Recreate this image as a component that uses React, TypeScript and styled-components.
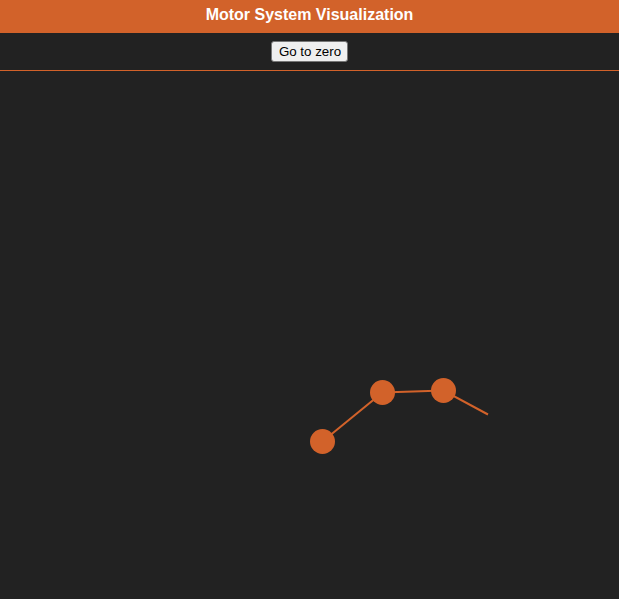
import React from "react";
import styled, { createGlobalStyle } from "styled-components";

const Global = createGlobalStyle`
  html, body { margin: 0; padding: 0; background: #222222; }
  body { font-family: "Liberation Sans", Arial, sans-serif; }
`;

const ACCENT = "#d2622a";

const Page = styled.div`
  display: flex;
  flex-direction: column;
  height: 599px;
  background: #222222;
`;

const Header = styled.header`
  height: 33px;
  box-sizing: border-box;
  background: ${ACCENT};
  color: #ffffff;
  font-weight: bold;
  font-size: 16px;
  display: flex;
  align-items: center;
  justify-content: center;
  padding-bottom: 4px;
`;

const Toolbar = styled.div`
  height: 38px;
  box-sizing: border-box;
  display: flex;
  justify-content: center;
  align-items: flex-start;
  padding-top: 8px;
  border-bottom: 1px solid ${ACCENT};
`;

const Button = styled.button`
  font-family: "Liberation Sans", Arial, sans-serif;
  font-size: 13.333px;
  height: 21px;
  padding: 1px 6px 1px 7px;
  background: #efefef;
  color: #000;
  border: 1px solid #767676;
  border-radius: 3px;
`;

const Canvas = styled.svg`
  flex: 1;
  display: block;
  width: 100%;
`;

const points = [
  [322.5, 441.5],
  [382.5, 392.5],
  [443.5, 390.5],
];
const tip = [488, 414.5];
const OFFSET = 71;

export default function App() {
  const all = [...points, tip];
  return (
    <Page>
      <Global />
      <Header>Motor System Visualization</Header>
      <Toolbar>
        <Button>Go to zero</Button>
      </Toolbar>
      <Canvas>
        <polyline
          points={all.map(([x, y]) => `${x},${y - OFFSET}`).join(" ")}
          fill="none"
          stroke={ACCENT}
          strokeWidth={2}
        />
        {points.map(([x, y], i) => (
          <circle key={i} cx={x} cy={y - OFFSET} r={12.5} fill={ACCENT} />
        ))}
      </Canvas>
    </Page>
  );
}
